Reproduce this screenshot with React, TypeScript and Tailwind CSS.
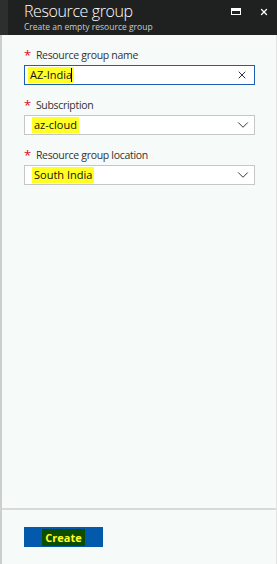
import { ChevronDown, X } from "lucide-react";

const FONT = "font-['Open_Sans','Liberation_Sans',sans-serif]";

function Field({ label, children }: { label: string; children: React.ReactNode }) {
  return (
    <div className="flex flex-col">
      <div className="flex h-[14px] items-center gap-[5px] text-[10.5px] leading-none tracking-[-0.3px] text-[#333]">
        <span className="text-[13px] text-[#e00b1c]">*</span>
        <span>{label}</span>
      </div>
      {children}
    </div>
  );
}

function Highlight({ children }: { children: React.ReactNode }) {
  return (
    <span className="inline-block bg-[#ffff26] px-[2px] text-[11px] leading-[16px] text-[#111]">
      {children}
    </span>
  );
}

function SelectBox({ value }: { value: string }) {
  return (
    <div className="mt-[3px] flex h-[20px] w-[231px] items-center justify-between border border-[#c5c7c6] bg-white pl-[7px] pr-[2px]">
      <Highlight>{value}</Highlight>
      <ChevronDown className="h-[18px] w-[18px] text-[#333]" strokeWidth={1.3} />
    </div>
  );
}

export default function App() {
  return (
    <div className={`${FONT} flex h-[564px] w-[277px] flex-col bg-[#f6faf8]`}>
      {/* header */}
      <div className="flex h-[35px] shrink-0 bg-[#1f2121]">
        <div className="w-[8px] bg-[#2d2f2f]" />
        <div className="flex flex-1 flex-col pl-[16px] pt-[1px]">
          <div className="text-[16px] font-light leading-[20px] tracking-[-0.4px] text-white">Resource group</div>
          <div className="mt-[1px] text-[8.5px] leading-[10px] text-[#c9cccb]">Create an empty resource group</div>
        </div>
        <div className="flex items-start gap-[18px] pr-[8px] pt-[7px]">
          <div className="mt-[1px] h-[7px] w-[10px] border border-t-[3px] border-white" />
          <X className="h-[10px] w-[10px] text-white" strokeWidth={3} />
        </div>
      </div>

      {/* body */}
      <div className="flex flex-1 border-l-2 border-r border-l-[#cdcfce] border-r-[#e2e4e3]">
        <div className="flex flex-1 flex-col">
          <div className="flex flex-col gap-[13px] pl-[22px] pt-[13px]">
            <Field label="Resource group name">
              <div className="mt-[3px] flex h-[20px] w-[231px] items-center justify-between border border-[#1a5fb4] bg-white pl-[3px] pr-[6px]">
                <span className="flex items-center">
                  <Highlight>AZ-India</Highlight>
                  <span className="-ml-[3px] h-[14px] w-px bg-black" />
                </span>
                <X className="h-[12px] w-[12px] text-[#333]" strokeWidth={2} />
              </div>
            </Field>
            <Field label="Subscription">
              <SelectBox value="az-cloud" />
            </Field>
            <Field label="Resource group location">
              <SelectBox value="South India" />
            </Field>
          </div>
          <div className="flex-1" />
          <div className="h-[2px] bg-[#d8dad9]" />
          <div className="h-[54px] pl-[22px] pt-[17px]">
            <button className="flex h-[20px] w-[79px] items-center justify-center bg-[#0359ab] text-[11px] font-bold">
              <span className="bg-[#0d4d00] px-[3px] leading-[17px] text-[#ffff26]">Create</span>
            </button>
          </div>
        </div>
      </div>
    </div>
  );
}
